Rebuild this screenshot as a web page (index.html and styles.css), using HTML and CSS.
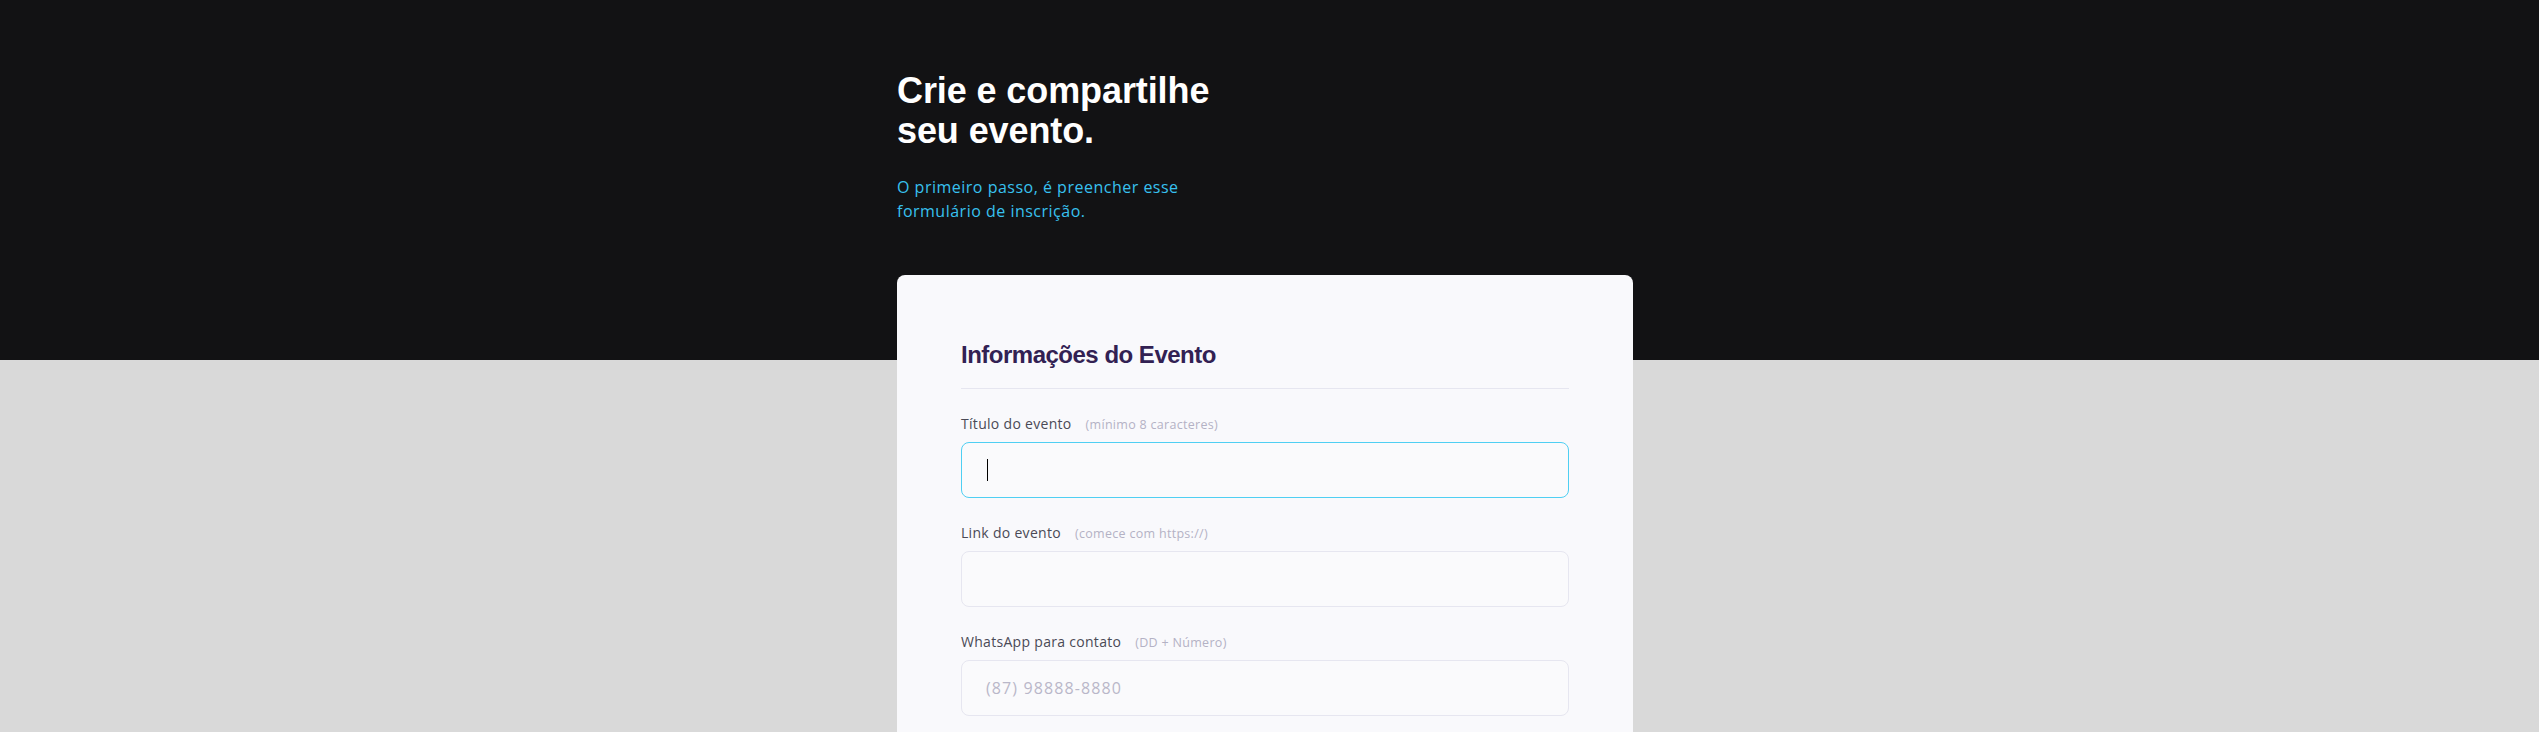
FILE: index.html
```html
<!DOCTYPE html>
<html lang="pt-BR">
<head>
<meta charset="utf-8">
<title>Crie e compartilhe seu evento</title>
<link rel="stylesheet" href="styles.css">
</head>
<body>
<div class="page">
  <header class="hero">
    <h1 class="hero-title">Crie e compartilhe<br>seu evento.</h1>
    <p class="hero-text">O primeiro passo, é preencher esse<br>formulário de inscrição.</p>
  </header>
  <form class="card">
    <h2 class="section-title">Informações do Evento</h2>
    <div class="field">
      <label class="label" for="titulo">Título do evento <span class="hint">(mínimo 8 caracteres)</span></label>
      <div class="control">
        <input class="input is-focused" id="titulo" type="text">
        <span class="caret"></span>
      </div>
    </div>
    <div class="field">
      <label class="label" for="link">Link do evento <span class="hint">(comece com https://)</span></label>
      <div class="control">
        <input class="input" id="link" type="text">
      </div>
    </div>
    <div class="field">
      <label class="label" for="whats">WhatsApp para contato <span class="hint">(DD + Número)</span></label>
      <div class="control">
        <input class="input" id="whats" type="text" placeholder="(87) 98888-8880">
      </div>
    </div>
  </form>
</div>
</body>
</html>
```
FILE: styles.css
```css
html {
  overflow: hidden;
}

body {
  margin: 0;
  padding-right: 9px;
  min-height: 100vh;
  background: linear-gradient(to bottom, #121214 0, #121214 360px, #d9d9d9 360px, #d9d9d9 100%);
  font-family: "Open Sans", "Noto Sans", sans-serif;
}

.page {
  width: 736px;
  margin: 0 auto;
}

.hero {
  padding-top: 71px;
}

.hero-title {
  margin: 0;
  font-family: "Liberation Sans", Arial, sans-serif;
  font-weight: 700;
  font-size: 36px;
  line-height: 40px;
  letter-spacing: -0.1px;
  color: #ffffff;
}

.hero-text {
  margin: 24px 0 0;
  font-size: 16px;
  line-height: 24px;
  letter-spacing: 0.5px;
  color: #38c1ef;
}

.card {
  margin-top: 52px;
  background: #f9f9fc;
  border-radius: 8px;
  padding: 64px;
  padding-bottom: 80px;
}

.section-title {
  margin: 0 0 24px;
  padding-bottom: 17px;
  border-bottom: 1px solid #e6e6f0;
  font-family: "Liberation Sans", Arial, sans-serif;
  font-weight: 700;
  font-size: 24px;
  line-height: 32px;
  letter-spacing: -0.5px;
  color: #322153;
}

.field {
  margin-bottom: 24px;
}

.label {
  display: flex;
  align-items: baseline;
  gap: 14px;
  height: 21px;
  font-size: 14px;
  line-height: 21px;
  letter-spacing: 0.3px;
  color: #4a4a56;
}

.hint {
  font-size: 12.5px;
  line-height: 1;
  letter-spacing: 0.3px;
  color: #b4b2c5;
}

.control {
  position: relative;
  margin-top: 8px;
}

.input {
  display: block;
  box-sizing: border-box;
  width: 100%;
  height: 56px;
  margin: 0;
  padding: 0 24px;
  border: 1px solid #e6e6f0;
  border-radius: 8px;
  background: #fafafc;
  font-family: "Open Sans", "Noto Sans", sans-serif;
  font-size: 16px;
  letter-spacing: 1.1px;
  color: #322153;
  outline: none;
}

.input::placeholder {
  color: #b9b7c9;
}

.input.is-focused {
  border-color: #4fcff3;
}

.caret {
  position: absolute;
  left: 26px;
  top: 17px;
  width: 1px;
  height: 22px;
  background: #000000;
}
```
